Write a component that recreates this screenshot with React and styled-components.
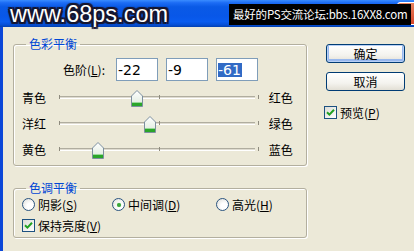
import React from "react";
import styled, { createGlobalStyle } from "styled-components";

const GlobalStyle = createGlobalStyle`
  html, body {
    margin: 0;
    padding: 0;
  }
  body {
    width: 414px;
    height: 251px;
    overflow: hidden;
    background: #ece9d8;
    font-family: "Noto Sans CJK SC", "DejaVu Sans", sans-serif;
    font-size: 12px;
    color: #000;
  }
`;

const Window = styled.div`
  width: 414px;
  height: 251px;
  display: flex;
  flex-direction: column;
  background: #ece9d8;
  overflow: hidden;
`;

const TitleBar = styled.div`
  position: relative;
  height: 27px;
  flex-shrink: 0;
  display: flex;
  align-items: center;
  justify-content: space-between;
  padding-left: 10px;
  background: linear-gradient(
    #3a8cff 0%,
    #1d6df5 10%,
    #0a5ae6 25%,
    #0857e8 60%,
    #0a5cef 80%,
    #064fd6 92%,
    #0340b0 100%
  );
`;

const Watermark = styled.span`
  font-family: "Liberation Sans", Arial, sans-serif;
  font-size: 23.5px;
  color: #fff;
  line-height: 27px;
  margin-top: 1px;
  text-shadow: 2px 0 0 #15152e, -2px 0 0 #15152e, 0 2px 0 #15152e,
    0 -2px 0 #15152e, 2px 2px 1px #15152e, -2px -2px 1px #15152e,
    2px -2px 1px #15152e, -2px 2px 1px #15152e;
`;

const CloseButton = styled.span`
  width: 21px;
  height: 21px;
  margin-right: -6px;
  border: 1px solid #fff;
  border-radius: 3px;
  background: linear-gradient(#e9845f, #d6462a);
`;

const Caption = styled.span`
  position: absolute;
  left: 229px;
  top: 4px;
  width: 182px;
  height: 21px;
  box-sizing: border-box;
  padding-left: 4px;
  background: #000;
  color: #fff;
  font-size: 11.5px;
  letter-spacing: -0.2px;
  line-height: 21px;
  white-space: nowrap;
`;

const Body = styled.div`
  flex: 1;
  display: flex;
  border-left: 3px solid #0b47d8;
  padding: 10px 0 0 10px;
`;

const LeftColumn = styled.div`
  width: 294px;
  display: flex;
  flex-direction: column;
`;

const Group = styled.fieldset`
  margin: ${(p) => p.$top || 0}px 0 0 0;
  padding: ${(p) => p.$pad};
  min-width: 0;
  border: 1px solid #b3af9f;
  border-radius: 3px;
  box-shadow: 1px 1px 0 #fff, inset 1px 1px 0 #fff;
`;

const Legend = styled.legend`
  margin-left: 12px;
  padding: 0 3px;
  color: #0046d5;
  font-size: 12px;
  line-height: 14px;
`;

const LevelsRow = styled.div`
  display: flex;
  align-items: center;
  height: 23px;
  margin-bottom: 3px;
  padding-left: 49px;
`;

const LevelsLabel = styled.span`
  width: 53px;
  white-space: nowrap;
`;

const Field = styled.div`
  width: 42px;
  height: 23px;
  box-sizing: border-box;
  margin-right: 8px;
  border: 1px solid #7f9db9;
  background: #fff;
  padding: 0 0 0 1px;
  display: flex;
  align-items: center;
  font-family: "DejaVu Sans", sans-serif;
  font-size: 14px;
`;

const Selected = styled.span`
  background: #316ac5;
  color: #fff;
  line-height: 14px;
  padding-right: 1px;
`;

const SliderRow = styled.div`
  display: flex;
  align-items: center;
  height: 26px;
  padding-left: 8px;
`;

const SideLabel = styled.span`
  width: 38px;
  margin-left: ${(p) => p.$lead || 0}px;
  white-space: nowrap;
`;

const Track = styled.div`
  position: relative;
  width: 200px;
  height: 26px;

  &::before {
    content: "";
    position: absolute;
    left: 0;
    right: 0;
    top: 12px;
    height: 1px;
    border-top: 1px solid #b0ad9f;
    border-bottom: 1px solid #fff;
    background: #dedbd0;
  }
`;

const Tick = styled.span`
  position: absolute;
  top: 11px;
  left: ${(p) => p.$at}px;
  width: 1px;
  height: 4px;
  background: #8e8b7e;
`;

const ThumbBox = styled.svg`
  position: absolute;
  top: 6px;
`;

const RadioRow = styled.div`
  display: flex;
  align-items: center;
  height: 19px;
  padding-left: 8px;
`;

const CheckRow = styled.div`
  display: flex;
  align-items: center;
  height: ${(p) => p.$h || 22}px;
  padding-left: ${(p) => p.$pl || 0}px;
  margin: ${(p) => p.$mt || 0}px 0 0 ${(p) => p.$ml || 0}px;
`;

const Option = styled.label`
  display: flex;
  align-items: center;
  width: ${(p) => p.$w}px;
  white-space: nowrap;
`;

const RadioCircle = styled.span`
  width: 11px;
  height: 11px;
  border: 1px solid #2a5480;
  border-radius: 50%;
  margin-right: 3px;
  background: radial-gradient(circle at 65% 65%, #fff 30%, #dcdcd6 100%);
  display: flex;
  align-items: center;
  justify-content: center;

  &::after {
    content: "";
    display: ${(p) => (p.$on ? "block" : "none")};
    width: 4px;
    height: 4px;
    border-radius: 50%;
    background: #3aa53a;
    box-shadow: 0 0 1px #7fd07f;
  }
`;

const CheckBox = styled.span`
  width: 11px;
  height: 11px;
  border: 1px solid #1c5180;
  margin-right: 3px;
  background: linear-gradient(135deg, #dcdcd6, #fff);
  display: flex;
  align-items: center;
  justify-content: center;
`;

const ButtonColumn = styled.div`
  width: 79px;
  margin-left: 19px;
  display: flex;
  flex-direction: column;
  padding-top: 7px;
`;

const Button = styled.button`
  height: 19px;
  margin-bottom: ${(p) => p.$mb || 0}px;
  padding: 0;
  border: 1px solid #003c74;
  border-radius: 3px;
  background: linear-gradient(#fff, #f4f3ee 60%, #e2dfd5);
  box-shadow: ${(p) =>
    p.$default ? "inset 0 0 0 1px #b7cff5, inset 0 -1px 0 2px #98b8ee" : "none"};
  font-family: "Noto Sans CJK SC", sans-serif;
  font-size: 12px;
  line-height: 16px;
  color: #000;
`;

const Key = styled.u`
  text-underline-offset: 1px;
`;

const Check = () => (
  <svg width="9" height="9" viewBox="0 0 9 9">
    <path d="M1 4.2 L3.4 6.6 L8 1.8" fill="none" stroke="#21a121" strokeWidth="2" />
  </svg>
);

const Thumb = ({ value }) => {
  const x = ((value + 100) / 200) * 200;
  return (
    <ThumbBox width="12" height="17" viewBox="0 0 12 17" style={{ left: x - 6 }}>
      <defs>
        <linearGradient id="thumbFill" x1="0" y1="0" x2="0" y2="1">
          <stop offset="0" stopColor="#ffffff" />
          <stop offset="1" stopColor="#dbe9db" />
        </linearGradient>
      </defs>
      <path d="M6 0.5 L11.5 6 V16.5 H0.5 V6 Z" fill="url(#thumbFill)" stroke="#7d8f9f" />
      <rect x="1" y="13" width="10" height="3" fill="#2aa52a" />
      <rect x="1" y="12" width="10" height="1" fill="#9ad89a" />
    </ThumbBox>
  );
};

const sliders = [
  { left: "青色", right: "红色", value: -22 },
  { left: "洋红", right: "绿色", value: -9 },
  { left: "黄色", right: "蓝色", value: -61 },
];

const App = () => {
  return (
    <>
      <GlobalStyle />
      <Window>
        <TitleBar>
          <Watermark>www.68ps.com</Watermark>
          <CloseButton />
          <Caption>最好的PS交流论坛:bbs.16XX8.com</Caption>
        </TitleBar>

        <Body>
          <LeftColumn>
            <Group $pad="7px 0 3px 0">
              <Legend>色彩平衡</Legend>
              <LevelsRow>
                <LevelsLabel>
                  色阶(<Key>L</Key>):
                </LevelsLabel>
                <Field>-22</Field>
                <Field>-9</Field>
                <Field>
                  <Selected>-61</Selected>
                </Field>
              </LevelsRow>
              {sliders.map((s) => (
                <SliderRow key={s.left}>
                  <SideLabel>{s.left}</SideLabel>
                  <Track>
                    <Tick $at={0} />
                    <Tick $at={100} />
                    <Tick $at={199} />
                    <Thumb value={s.value} />
                  </Track>
                  <SideLabel $lead={14}>{s.right}</SideLabel>
                </SliderRow>
              ))}
            </Group>

            <Group $top={15} $pad="0 0 1px 0">
              <Legend>色调平衡</Legend>
              <RadioRow>
                <Option $w={90}>
                  <RadioCircle />
                  阴影(<Key>S</Key>)
                </Option>
                <Option $w={104}>
                  <RadioCircle $on />
                  中间调(<Key>D</Key>)
                </Option>
                <Option $w={70}>
                  <RadioCircle />
                  高光(<Key>H</Key>)
                </Option>
              </RadioRow>
              <CheckRow $pl={8}>
                <CheckBox>
                  <Check />
                </CheckBox>
                保持亮度(<Key>V</Key>)
              </CheckRow>
            </Group>
          </LeftColumn>

          <ButtonColumn>
            <Button $default $mb={9}>
              确定
            </Button>
            <Button>取消</Button>
            <CheckRow $h={13} $mt={15} $ml={-2}>
              <CheckBox>
                <Check />
              </CheckBox>
              预览(<Key>P</Key>)
            </CheckRow>
          </ButtonColumn>
        </Body>
      </Window>
    </>
  );
};

export default App;
